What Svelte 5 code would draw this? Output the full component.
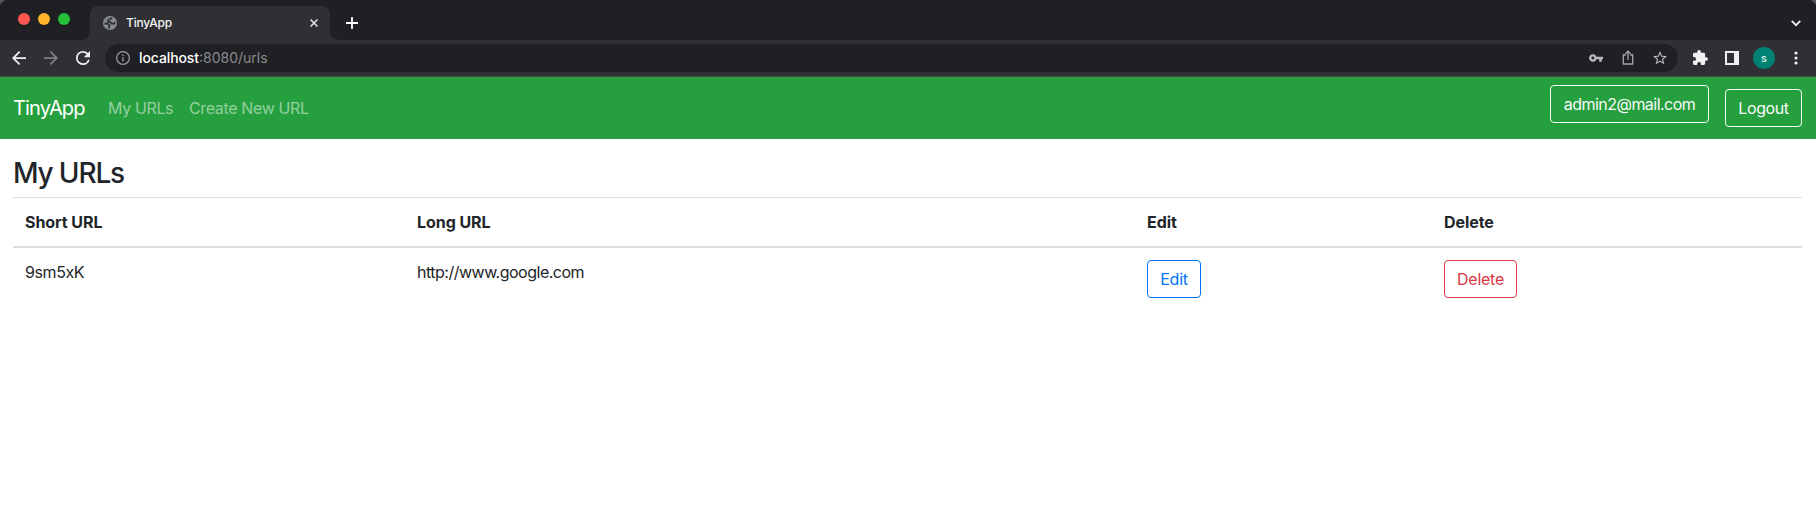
<script>
  const rows = [{ id: '9sm5xK', url: 'http://www.google.com' }];
</script>

<div class="window">
  <div class="tabs">
    <div class="lights"><i class="red"></i><i class="yellow"></i><i class="green"></i></div>
    <div class="tab">
      <svg class="globe" viewBox="2 2 20 20" width="14" height="14"><circle cx="12" cy="12" r="10" fill="#868b90" /><path fill="none" stroke="#303034" stroke-width="2.400" stroke-linejoin="round" d="M15 4.500l-2.500 1.800-3 1.200-.5 3h3.500l2 2.500h3.500l1-2.500M4 13h4.500l3 2.500-1 1.500.5 3" /></svg>
      <span class="tabname">TinyApp</span>
      <svg class="close" viewBox="0 0 8 8" width="8" height="8"><path d="M.5.5l7 7M7.500.5l-7 7" stroke="#e8e8ea" stroke-width="1.500" /></svg>
    </div>
    <svg class="plus" viewBox="0 0 12 12" width="12" height="12"><path d="M6 0v12M0 6h12" stroke="#fff" stroke-width="1.800" /></svg>
    <svg class="chev" viewBox="0 0 10 7" width="10" height="7"><path d="M.7.9L5 5.200 9.300.9" fill="none" stroke="#f1f1f1" stroke-width="1.800" /></svg>
  </div>

  <div class="toolbar">
    <svg class="back" viewBox="4 4 16 16" width="14" height="14"><path fill="#f1f1f3" d="M20 11H7.830l5.590-5.590L12 4l-8 8 8 8 1.410-1.410L7.830 13H20z" /></svg>
    <svg class="fwd" viewBox="4 4 16 16" width="14" height="14"><path fill="#808084" d="M12 4l-1.410 1.410L16.170 11H4v2h12.170l-5.580 5.590L12 20l8-8z" /></svg>
    <svg class="reload" viewBox="4 4 16 16" width="14" height="14"><path fill="#f1f1f3" d="M17.650 6.350A7.960 7.960 0 0 0 12 4a8 8 0 1 0 7.730 10h-2.080A6 6 0 1 1 12 6c1.660 0 3.140.69 4.220 1.780L13 11h7V4z" /></svg>
    <div class="omnibox">
      <svg class="info" viewBox="2 2 20 20" width="14" height="14"><path fill="#9a9b9f" d="M11 7h2v2h-2zm0 4h2v6h-2zm1-9a10 10 0 1 0 0 20 10 10 0 0 0 0-20zm0 18.200a8.200 8.200 0 1 1 0-16.400 8.200 8.200 0 0 1 0 16.400z" /></svg>
      <span class="address"><b>localhost</b>:8080/urls</span>
      <svg class="key" viewBox="1 6 22 12" width="14" height="8"><path fill="#b9b9bb" d="M12.650 10A6 6 0 1 0 12.650 14H17v4h4v-4h2v-4zM7 14.200a2.200 2.200 0 1 1 0-4.400 2.200 2.200 0 0 1 0 4.400z" /></svg>
      <svg class="share" viewBox="0 0 12 15" width="12" height="15"><path fill="none" stroke="#a6a6a8" stroke-width="1.300" d="M3.800 5H1.300v9h9.400V5H8.200M6 10V1.300M3.300 3.900L6 1.200l2.700 2.700" /></svg>
      <svg class="star" viewBox="2 2 20 19" width="14" height="13.300"><path fill="#b9b9bb" d="M22 9.240l-7.190-.62L12 2 9.190 8.630 2 9.240l5.460 4.730L5.820 21 12 17.270 18.180 21l-1.630-7.030zM12 15.400l-3.760 2.270 1-4.280-3.320-2.880 4.380-.38L12 6.100l1.710 4.040 4.380.38-3.320 2.880 1 4.280z" /></svg>
    </div>
    <svg class="puzzle" viewBox="2 1 21 21" width="15" height="15"><path fill="#f1f1f3" d="M20.500 11H19V7a2 2 0 0 0-2-2h-4V3.500a2.500 2.500 0 0 0-5 0V5H4a2 2 0 0 0-2 2v3.800h1.500a2.700 2.700 0 0 1 0 5.400H2V20a2 2 0 0 0 2 2h3.800v-1.500a2.700 2.700 0 0 1 5.400 0V22H17a2 2 0 0 0 2-2v-4h1.500a2.500 2.500 0 0 0 0-5z" /></svg>
    <svg class="panel" viewBox="0 0 14 14" width="14" height="14"><path fill="#f1f1f3" fill-rule="evenodd" d="M0 0h14v14H0zM2 2v10h7V2z" /></svg>
    <span class="avatar">s</span>
    <svg class="dots" viewBox="0 0 4 14" width="4" height="14" fill="#f1f1f3"><circle cx="2" cy="2" r="1.600" /><circle cx="2" cy="7" r="1.600" /><circle cx="2" cy="12" r="1.600" /></svg>
  </div>

  <nav>
    <span class="brand">TinyApp</span>
    <span class="link mine">My URLs</span>
    <span class="link create">Create New URL</span>
    <div class="account">
      <button class="btn light email"><span>admin2@mail.com</span></button>
      <button class="btn light logout"><span>Logout</span></button>
    </div>
  </nav>

  <main>
    <h3>My URLs</h3>
    <div class="row head">
      <div>Short URL</div><div>Long URL</div><div>Edit</div><div>Delete</div>
    </div>
    {#each rows as row}
      <div class="row">
        <div class="short">{row.id}</div>
        <div class="long">{row.url}</div>
        <div><button class="btn edit"><span>Edit</span></button></div>
        <div><button class="btn delete"><span>Delete</span></button></div>
      </div>
    {/each}
  </main>
</div>

<style>
  :global(body) { margin: 0; background: #fff; }
  .window { height: 527px; overflow: hidden; font: 16px/24px Inter, sans-serif; color: #212529; }
  .window * { box-sizing: border-box; }
  svg { display: block; flex: none; }
  span { white-space: nowrap; }
  .tabs { display: flex; height: 40px; background: radial-gradient(circle at 10px 10px, transparent 10.500px, #55565a 11.500px) 0 0 / 10px 10px no-repeat, radial-gradient(circle at 0 10px, transparent 10.500px, #55565a 11.500px) 100% 0 / 10px 10px no-repeat, #1f2023; }
  .lights { display: flex; gap: 8px; padding: 13px 0 0 18px; width: 90px; flex: none; }
  .lights i { width: 12px; height: 12px; border-radius: 50%; }
  .red { background: #ff5650; }
  .yellow { background: #ffb429; }
  .green { background: #24c138; }
  .tab { position: relative; display: flex; align-items: center; margin-top: 6px; width: 240px; height: 34px; padding: 0 12px 0 13px; background: #303034; border-radius: 8px 8px 0 0; }
  .tab::before, .tab::after { content: ''; position: absolute; bottom: 0; width: 8px; height: 8px; }
  .tab::before { left: -8px; background: radial-gradient(circle at 0 0, transparent 7.500px, #303034 8px); }
  .tab::after { right: -8px; background: radial-gradient(circle at 100% 0, transparent 7.500px, #303034 8px); }
  .tabname { margin-left: 9px; font-size: 12px; color: #f5f5f5; font-weight: 500; letter-spacing: -.2px; }
  .close { margin-left: auto; }
  .plus { margin: 17px 0 0 16px; }
  .chev { margin: 20px 15px 0 auto; }
  .toolbar { display: flex; align-items: center; height: 37px; padding: 0 18px 1px 12px; background: #303034; border-bottom: 1px solid #4b4b50; }
  .fwd { margin-left: 18px; }
  .reload { margin-left: 18px; }
  .omnibox { display: flex; align-items: center; width: 1573px; height: 28px; margin-left: 15px; padding: 0 11px; border-radius: 14px; background: #1f2023; }
  .address { margin-left: 9px; font-size: 14px; color: #8b8b8e; }
  .address b { font-weight: 500; letter-spacing: -.1px; color: #fff; }
  .key { margin-left: auto; }
  .share { margin-left: 19px; }
  .star { margin-left: 19px; }
  .puzzle { margin-left: 15px; }
  .panel { margin-left: 17px; }
  .avatar { width: 22px; height: 22px; margin-left: 14px; border-radius: 50%; background: #008272; color: #e5f4f2; font-size: 11px; font-weight: 500; line-height: 22px; text-align: center; }
  .dots { margin-left: auto; }
  nav { display: flex; align-items: center; height: 62px; padding: 0 14px 0 13px; background: #269f3e; }
  .brand { font-size: 20px; color: #fff; width: 95px; letter-spacing: -.82px; }
  .link { color: rgba(255, 255, 255, .5); letter-spacing: -.36px; }
  .mine { width: 81px; }
  .account { display: flex; gap: 16px; height: 46px; margin-left: auto; align-items: flex-start; }
  .btn { height: 38px; padding: 0; border: 1px solid; border-radius: 4px; background: none; font: inherit; text-align: center; }
  .light { color: #f8f9fa; }
  .email { width: 159px; letter-spacing: -.53px; }
  .logout { width: 77px; margin-top: 4px; letter-spacing: -.38px; }
  main { padding: 16px 14px 0 13px; }
  h3 { margin: 0 0 7px; height: 35px; padding-top: 1px; font-size: 28px; line-height: 34px; font-weight: 500; letter-spacing: -1.150px; }
  .row { display: grid; grid-template-columns: 392px 730px 297px 1fr; }
  .row > div { padding: 12px; }
  .head { height: 51px; border-top: 1px solid #dcdfe2; border-bottom: 2px solid #dcdfe2; font-weight: 700; letter-spacing: -.06px; }
  .short { letter-spacing: -.4px; }
  .long { letter-spacing: -.5px; }
  .edit { width: 54px; color: #0073fb; letter-spacing: -.2px; }
  .delete { width: 73px; color: #d93744; letter-spacing: -.25px; }
</style>
